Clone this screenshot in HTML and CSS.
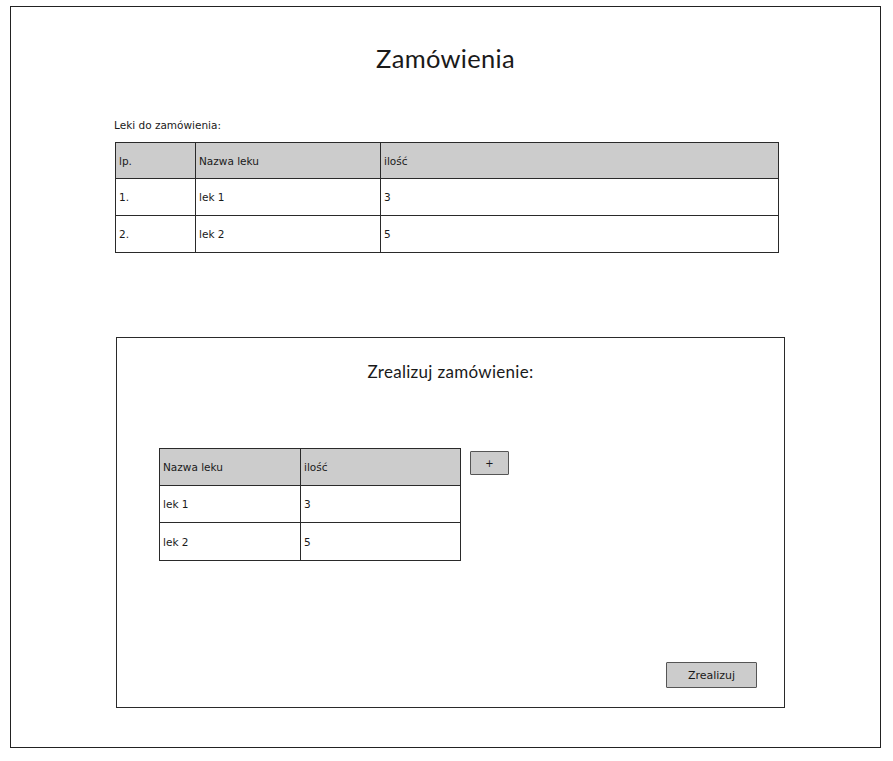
FILE: index.html
```html
<!DOCTYPE html>
<html lang="pl">
<head>
<meta charset="utf-8">
<title>Zamówienia</title>
<link rel="stylesheet" href="styles.css">
</head>
<body>
<div class="frame">
  <h1 class="title">Zamówienia</h1>
  <p class="label">Leki do zamówienia:</p>
  <div class="grid grid-orders">
    <div class="cell head">lp.</div>
    <div class="cell head">Nazwa leku</div>
    <div class="cell head">ilość</div>
    <div class="cell">1.</div>
    <div class="cell">lek 1</div>
    <div class="cell">3</div>
    <div class="cell last">2.</div>
    <div class="cell last">lek 2</div>
    <div class="cell last">5</div>
  </div>

  <section class="panel">
    <h2 class="panel-title">Zrealizuj zamówienie:</h2>
    <div class="panel-row">
      <div class="grid grid-items">
        <div class="cell head">Nazwa leku</div>
        <div class="cell head">ilość</div>
        <div class="cell">lek 1</div>
        <div class="cell">3</div>
        <div class="cell last">lek 2</div>
        <div class="cell last">5</div>
      </div>
      <button class="btn btn-plus" type="button">+</button>
    </div>
    <div class="panel-actions">
      <button class="btn btn-submit" type="button">Zrealizuj</button>
    </div>
  </section>
</div>
</body>
</html>
```

FILE: styles.css
```css
* { box-sizing: border-box; }

html, body {
  margin: 0;
  padding: 0;
  background: #ffffff;
}

body {
  font-family: "DejaVu Sans", "Noto Sans", sans-serif;
  color: #1a1a1a;
}

.frame {
  margin: 6px 0 0 10px;
  width: 871px;
  height: 742px;
  border: 1px solid #222;
  padding: 36px 0 0 104px;
}

.title {
  margin: 0 0 0 -104px;
  font-family: "Lato", "DejaVu Sans", sans-serif;
  font-weight: 400;
  font-size: 25.5px;
  line-height: 30px;
  text-align: center;
  letter-spacing: 0.3px;
}

.label {
  margin: 45px 0 0 -1px;
  font-size: 10.5px;
  line-height: 14px;
}

.grid {
  display: grid;
  border-top: 1px solid #2a2a2a;
  border-left: 1px solid #2a2a2a;
  margin-top: 10px;
}

.grid-orders {
  width: 664px;
  grid-template-columns: 80px 185px 1fr;
  grid-template-rows: 36px 37px 37px;
  border-right: 1px solid #2a2a2a;
}

.cell {
  display: flex;
  align-items: center;
  padding-left: 3px;
  font-size: 10.5px;
  border-right: 1px solid #2a2a2a;
  border-bottom: 1px solid #2a2a2a;
  white-space: nowrap;
}

.grid-orders .cell:nth-child(3n),
.grid-items .cell:nth-child(2n) {
  border-right: none;
}

.head {
  background: #cccccc;
}

.panel {
  margin: 84px 0 0 1px;
  width: 669px;
  height: 371px;
  border: 1px solid #2a2a2a;
  display: flex;
  flex-direction: column;
  padding: 24px 0 0 42px;
}

.panel-title {
  margin: 0 0 0 -42px;
  font-family: "Lato", "DejaVu Sans", sans-serif;
  font-weight: 400;
  font-size: 17px;
  line-height: 20px;
  text-align: center;
  letter-spacing: 0.3px;
}

.panel-row {
  display: flex;
  align-items: flex-start;
  gap: 9px;
  margin-top: 66px;
}

.grid-items {
  margin-top: 0;
  width: 302px;
  grid-template-columns: 141px 1fr;
  grid-template-rows: 37px 37px 38px;
  border-right: 1px solid #2a2a2a;
}

.btn {
  font-family: "DejaVu Sans", sans-serif;
  font-size: 10px;
  color: #1a1a1a;
  background: #cccccc;
  border: 1px solid #555;
  border-radius: 1px;
  padding: 0;
  cursor: pointer;
}

.btn-plus {
  margin-top: 3px;
  width: 39px;
  height: 24px;
}

.panel-actions {
  margin-top: auto;
  display: flex;
  justify-content: flex-end;
  padding: 0 27px 19px 0;
}

.btn-submit {
  width: 91px;
  height: 26px;
  font-size: 11px;
}
```
